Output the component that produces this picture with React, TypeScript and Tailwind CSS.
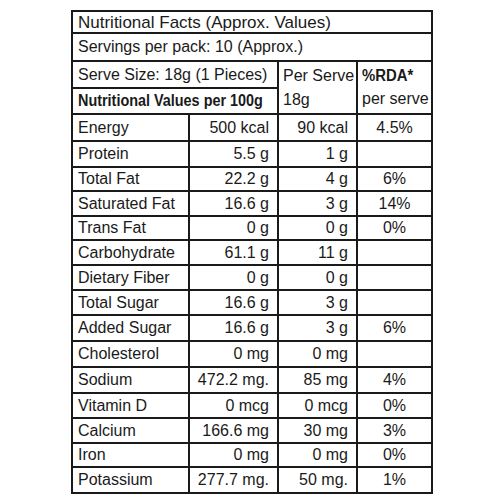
import React from "react";

const rows: [string, string, string, string, number][] = [
  ["Energy", "500 kcal", "90 kcal", "4.5%", 27],
  ["Protein", "5.5 g", "1 g", "", 26],
  ["Total Fat", "22.2 g", "4 g", "6%", 24],
  ["Saturated Fat", "16.6 g", "3 g", "14%", 25],
  ["Trans Fat", "0 g", "0 g", "0%", 24],
  ["Carbohydrate", "61.1 g", "11 g", "", 25],
  ["Dietary Fiber", "0 g", "0 g", "", 25],
  ["Total Sugar", "16.6 g", "3 g", "", 25],
  ["Added Sugar", "16.6 g", "3 g", "6%", 26],
  ["Cholesterol", "0 mg", "0 mg", "", 26],
  ["Sodium", "472.2 mg.", "85 mg", "4%", 26],
  ["Vitamin D", "0 mcg", "0 mcg", "0%", 25],
  ["Calcium", "166.6 mg", "30 mg", "3%", 25],
  ["Iron", "0 mg", "0 mg", "0%", 24],
  ["Potassium", "277.7 mg.", "50 mg.", "1%", 26],
];

const cell = "border-2 border-[#1a1a1a] p-0 leading-none whitespace-nowrap";

export default function App() {
  return (
    <div
      className="w-[500px] h-[500px] bg-white pt-[10px] pl-[71px] text-[#1a1a1a]"
      style={{ fontFamily: '"Liberation Sans", Arial, sans-serif' }}
    >
      <table className="table-fixed border-collapse border-2 border-[#1a1a1a] w-[360px]">
        <colgroup>
          <col className="w-[117px]" />
          <col className="w-[89px]" />
          <col className="w-[79px]" />
          <col className="w-[75px]" />
        </colgroup>
        <tbody>
          <tr className="h-[22px]">
            <td colSpan={4} className={`${cell} pl-[5px] text-[17px]`}>
              Nutritional Facts (Approx. Values)
            </td>
          </tr>
          <tr className="h-[28px]">
            <td colSpan={4} className={`${cell} pl-[5px] text-[16px]`}>
              Servings per pack: 10 (Approx.)
            </td>
          </tr>
          <tr className="h-[27px]">
            <td colSpan={2} className={`${cell} pl-[5px] text-[16px]`}>
              Serve Size: 18g (1 Pieces)
            </td>
            <td rowSpan={2} className={`${cell} pl-[4px] text-[16px] align-top`}>
              <div className="flex flex-col justify-between h-[48px] pt-[6px] pb-[2px]">
                <span>Per Serve</span>
                <span>18g</span>
              </div>
            </td>
            <td rowSpan={2} className={`${cell} pl-[4px] text-[16px] align-top`}>
              <div className="flex flex-col justify-between h-[48px] pt-[6px] pb-[3px]">
                <span className="inline-block origin-left scale-x-[0.93] font-bold">%RDA*</span>
                <span>per serve</span>
              </div>
            </td>
          </tr>
          <tr className="h-[26px]">
            <td colSpan={2} className={`${cell} pl-[5px] text-[16px] font-bold`}>
              <span className="inline-block origin-left scale-x-[0.9]">
                Nutritional Values per 100g
              </span>
            </td>
          </tr>
          {rows.map(([name, a, b, c, h]) => (
            <tr key={name} style={{ height: h }}>
              <td className={`${cell} pl-[5px] text-[16px]`}>{name}</td>
              <td className={`${cell} pr-[8px] text-right text-[16px]`}>{a}</td>
              <td className={`${cell} pr-[8px] text-right text-[16px]`}>{b}</td>
              <td className={`${cell} text-center text-[16px]`}>{c}</td>
            </tr>
          ))}
        </tbody>
      </table>
    </div>
  );
}
